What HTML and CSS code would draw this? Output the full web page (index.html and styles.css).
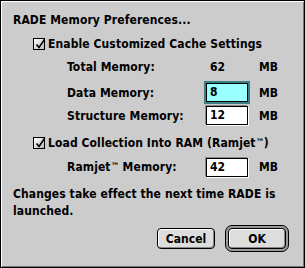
FILE: index.html
```html
<!DOCTYPE html>
<html lang="en">
<head>
    <meta charset="UTF-8">
    <title>RADE Memory Preferences</title>
    <link rel="stylesheet" href="styles.css">
</head>
<body>
    <div class="dialog">
        <div class="title">RADE Memory Preferences...</div>

        <div class="check-row first">
            <span class="checkbox">
                <svg width="12" height="12" viewBox="0 0 12 12"><path d="M2.5 6.5 L5 9.5 L10.5 1.5" fill="none" stroke="#000" stroke-width="1.6"/></svg>
            </span>
            <span>Enable Customized Cache Settings</span>
        </div>

        <div class="mem-row total">
            <span class="label">Total Memory:</span>
            <span class="value">62</span>
            <span class="unit">MB</span>
        </div>
        <div class="mem-row data">
            <span class="label">Data Memory:</span>
            <span class="field focus">8</span>
            <span class="unit">MB</span>
        </div>
        <div class="mem-row structure">
            <span class="label">Structure Memory:</span>
            <span class="field">12</span>
            <span class="unit">MB</span>
        </div>

        <div class="check-row second">
            <span class="checkbox">
                <svg width="12" height="12" viewBox="0 0 12 12"><path d="M2.5 6.5 L5 9.5 L10.5 1.5" fill="none" stroke="#000" stroke-width="1.6"/></svg>
            </span>
            <span>Load Collection Into RAM (Ramjet<span class="tm">&trade;</span>)</span>
        </div>

        <div class="mem-row ramjet">
            <span class="label">Ramjet<span class="tm">&trade;</span> Memory:</span>
            <span class="field">42</span>
            <span class="unit">MB</span>
        </div>

        <p class="note">Changes take effect the next time RADE is launched.</p>

        <div class="buttons">
            <button class="btn">Cancel</button>
            <span class="default-ring"><button class="btn ok">OK</button></span>
        </div>
    </div>
</body>
</html>
```

FILE: styles.css
```css
body {
    margin: 0;
    background-color: #cccccc;
}
.dialog {
    box-sizing: border-box;
    width: 305px;
    height: 268px;
    background-color: #cccccc;
    border: 1px solid #000;
    box-shadow: inset 1px 1px 0 #fff, inset -1px -1px 0 #777;
    padding: 8px 0 0 12px;
    font-family: "DejaVu Sans Condensed", "DejaVu Sans", sans-serif;
    font-weight: bold;
    font-size: 12px;
    letter-spacing: 0.1px;
    color: #000;
}
.title {
    height: 22px;
    line-height: 22px;
}
.check-row {
    display: flex;
    align-items: center;
    height: 22px;
    padding-left: 20px;
}
.check-row.first {
    margin-top: 2px;
}
.check-row.second {
    margin-top: 6px;
}
.checkbox {
    box-sizing: border-box;
    width: 12px;
    height: 12px;
    border: 1px solid #000;
    background: linear-gradient(135deg, #fff, #bbb);
    margin-right: 3px;
    position: relative;
}
.checkbox svg {
    position: absolute;
    left: 0;
    top: -1px;
}
.tm {
    font-size: 9px;
    vertical-align: 2px;
    letter-spacing: 0;
}
.mem-row {
    display: grid;
    grid-template-columns: 128px 42px auto;
    column-gap: 11px;
    align-items: center;
    height: 22px;
    padding-left: 54px;
}
.mem-row.total {
    margin-top: 1px;
}
.mem-row.data {
    margin-top: 3px;
    height: 23px;
}
.mem-row.structure {
    margin-top: 1px;
    height: 21px;
}
.mem-row.ramjet {
    margin-top: 2px;
}
.value {
    padding-left: 4px;
}
.field {
    box-sizing: border-box;
    height: 19px;
    line-height: 17px;
    border: 1px solid #000;
    background-color: #fff;
    padding-left: 3px;
    box-shadow: -1px -1px 0 #888, 1px 1px 0 #fff;
}
.field.focus {
    background-color: #99ffff;
    box-shadow: 0 0 0 2px #3a7f86;
}
.note {
    margin: 8px 0 0;
    line-height: 17px;
    width: 270px;
}
.buttons {
    display: flex;
    justify-content: flex-end;
    align-items: center;
    gap: 10px;
    margin-top: 5px;
    height: 27px;
    padding-right: 15px;
}
.btn {
    box-sizing: border-box;
    font: inherit;
    color: #000;
    width: 58px;
    height: 21px;
    padding: 0;
    border: 1px solid #000;
    border-radius: 4px;
    background-color: #dddddd;
    box-shadow: inset 1px 1px 0 #fff, inset -1px -1px 0 #888;
}
.default-ring {
    display: flex;
    box-sizing: border-box;
    width: 64px;
    height: 27px;
    padding: 2px;
    border: 1px solid #000;
    border-radius: 7px;
    background-color: #999;
}
.btn.ok {
    width: 100%;
    height: 100%;
}
```
